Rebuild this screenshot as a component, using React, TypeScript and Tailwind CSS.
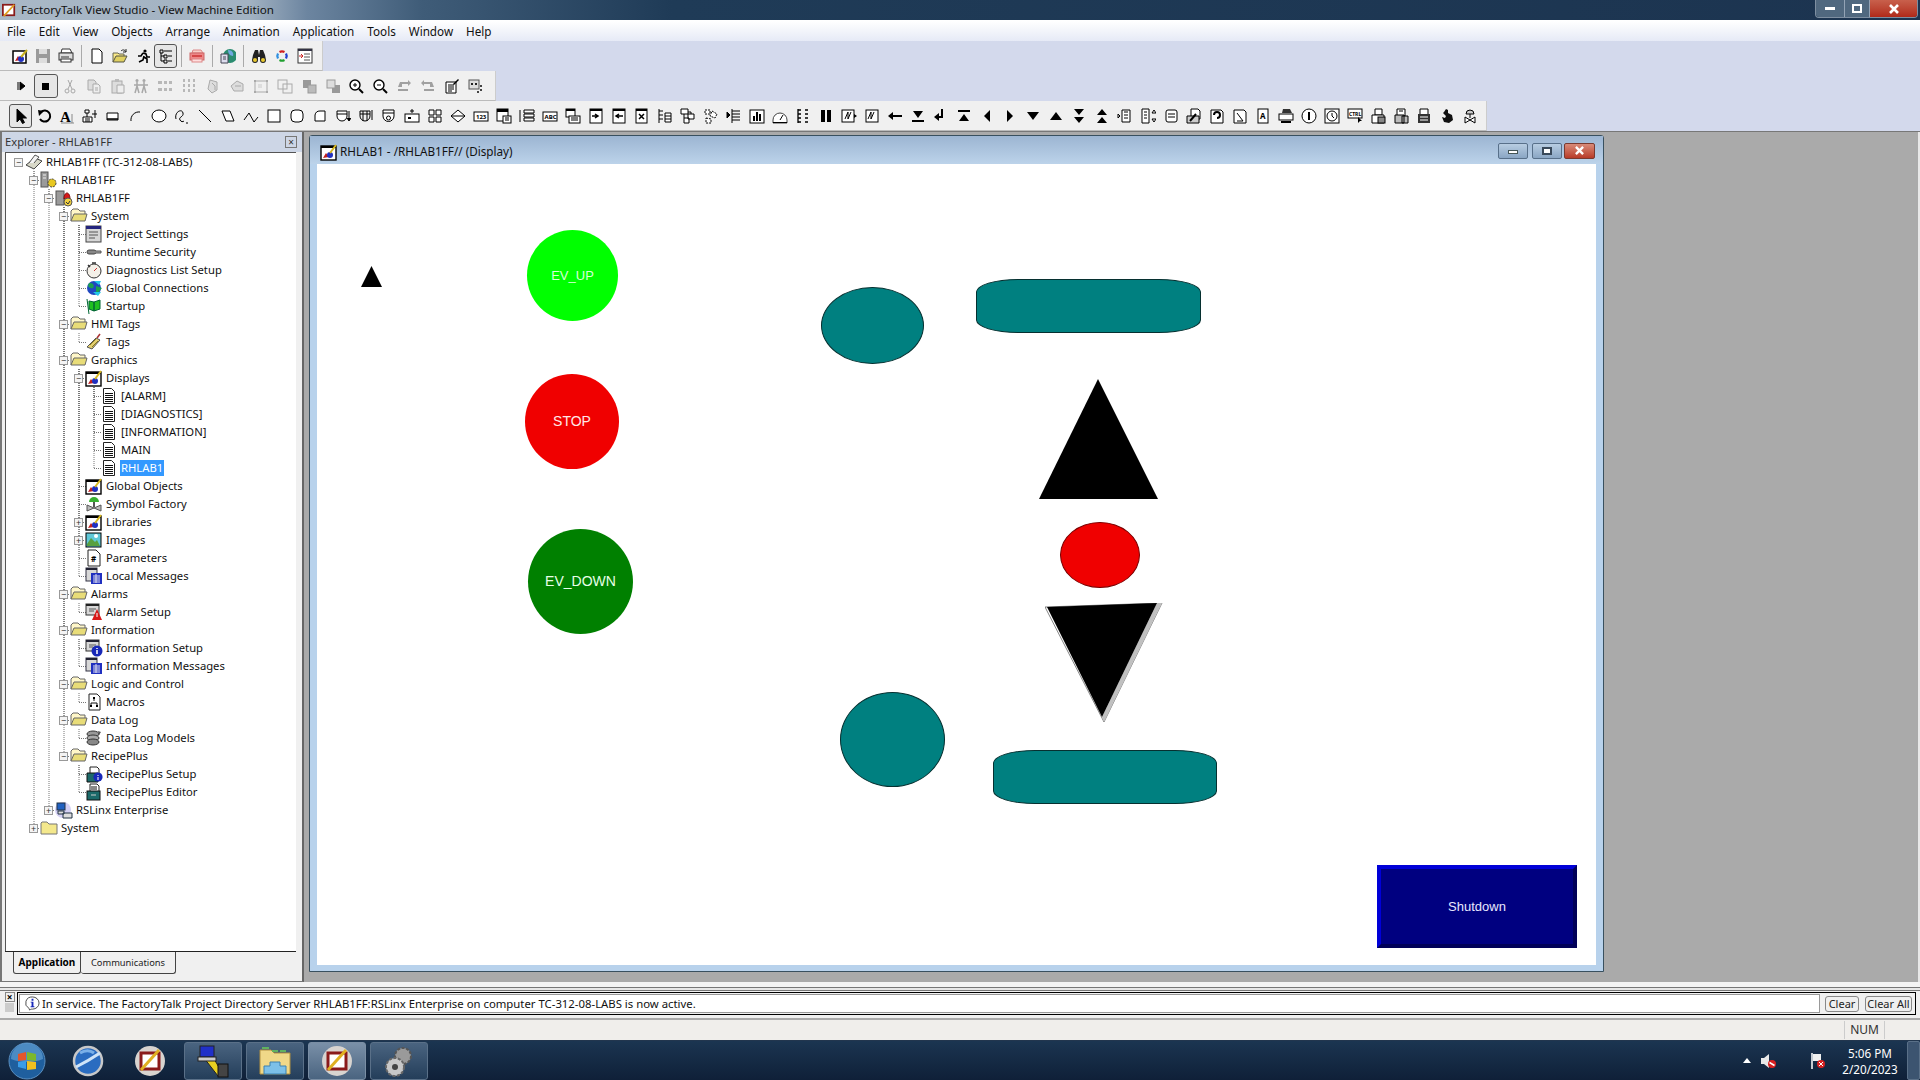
import type { ReactNode } from "react"

const treeRows: { label: string; depth: number; icon: string; toggle?: "-" | "+"; selected?: boolean }[] = [
  { label: "RHLAB1FF (TC-312-08-LABS)", depth: 0, icon: "root", toggle: "-" },
  { label: "RHLAB1FF", depth: 1, icon: "app", toggle: "-" },
  { label: "RHLAB1FF", depth: 2, icon: "server", toggle: "-" },
  { label: "System", depth: 3, icon: "folderOpen", toggle: "-" },
  { label: "Project Settings", depth: 4, icon: "settings" },
  { label: "Runtime Security", depth: 4, icon: "key" },
  { label: "Diagnostics List Setup", depth: 4, icon: "watch" },
  { label: "Global Connections", depth: 4, icon: "globe" },
  { label: "Startup", depth: 4, icon: "flag" },
  { label: "HMI Tags", depth: 3, icon: "folderOpen", toggle: "-" },
  { label: "Tags", depth: 4, icon: "tag" },
  { label: "Graphics", depth: 3, icon: "folderOpen", toggle: "-" },
  { label: "Displays", depth: 4, icon: "paint", toggle: "-" },
  { label: "[ALARM]", depth: 5, icon: "doc" },
  { label: "[DIAGNOSTICS]", depth: 5, icon: "doc" },
  { label: "[INFORMATION]", depth: 5, icon: "doc" },
  { label: "MAIN", depth: 5, icon: "doc" },
  { label: "RHLAB1", depth: 5, icon: "doc", selected: true },
  { label: "Global Objects", depth: 4, icon: "paint" },
  { label: "Symbol Factory", depth: 4, icon: "valve" },
  { label: "Libraries", depth: 4, icon: "paint", toggle: "+" },
  { label: "Images", depth: 4, icon: "image", toggle: "+" },
  { label: "Parameters", depth: 4, icon: "param" },
  { label: "Local Messages", depth: 4, icon: "messages" },
  { label: "Alarms", depth: 3, icon: "folderOpen", toggle: "-" },
  { label: "Alarm Setup", depth: 4, icon: "alarm" },
  { label: "Information", depth: 3, icon: "folderOpen", toggle: "-" },
  { label: "Information Setup", depth: 4, icon: "info" },
  { label: "Information Messages", depth: 4, icon: "messages" },
  { label: "Logic and Control", depth: 3, icon: "folderOpen", toggle: "-" },
  { label: "Macros", depth: 4, icon: "macro" },
  { label: "Data Log", depth: 3, icon: "folderOpen", toggle: "-" },
  { label: "Data Log Models", depth: 4, icon: "datalog" },
  { label: "RecipePlus", depth: 3, icon: "folderOpen", toggle: "-" },
  { label: "RecipePlus Setup", depth: 4, icon: "recipeInfo" },
  { label: "RecipePlus Editor", depth: 4, icon: "recipeDisk" },
  { label: "RSLinx Enterprise", depth: 2, icon: "rslinx", toggle: "+" },
  { label: "System", depth: 1, icon: "folder", toggle: "+" },
]

const depthPadding = ["pl-[8px]", "pl-[23px]", "pl-[38px]", "pl-[53px]", "pl-[68px]", "pl-[83px]"]

function TreeIcon({ name }: { name: string }) {
  const icons: Record<string, ReactNode> = {
    root: <><path d="M1 12l9-7 7 3-8 8z" fill="#d8d8c8" stroke="#444" /><path d="M4 10l6-8 4 2-5 6" fill="#f4f4f4" stroke="#555" /></>,
    app: <><rect x="1" y="1" width="7" height="15" fill="#9a9a9a" stroke="#555" /><path d="M3 4h3M3 7h3" stroke="#eee" /><circle cx="12" cy="12" r="4" fill="#e8c820" stroke="#444" strokeDasharray="2 1" /></>,
    server: <><rect x="1" y="2" width="8" height="14" fill="#9a9a9a" stroke="#555" /><path d="M9 10c0-8 6-8 6 0z" fill="#d81818" stroke="#700" /><circle cx="13" cy="13" r="4" fill="#f0d040" stroke="#555" /><path d="M11 13l2 2 2-3" stroke="#333" fill="none" /></>,
    folderOpen: <><path d="M1 14V4l2-2h5l2 2h5v3" fill="#fff7c8" stroke="#666" /><path d="M1 14l3-7h13l-2 7z" fill="#e8dc78" stroke="#666" /></>,
    folder: <path d="M1 15V4l1-1h5l2 2h8v10z" fill="#f4e88c" stroke="#777" />,
    settings: <><rect x="1" y="1" width="15" height="16" fill="#d6d6d6" stroke="#444" /><rect x="1" y="1" width="15" height="3" fill="#24247c" /><path d="M4 7h9M4 10h9M4 13h6" stroke="#555" /></>,
    key: <><rect x="2" y="7" width="9" height="4" rx="2" fill="#888" stroke="#444" /><path d="M10 8h6v2h-6" fill="#aaa" stroke="#555" /></>,
    watch: <><circle cx="9" cy="10" r="7" fill="#f4f0e8" stroke="#333" /><path d="M9 10l3-3" stroke="#c33" /><path d="M7 2h4M3 4l2 2" stroke="#333" strokeWidth="1.5" /></>,
    globe: <><circle cx="9" cy="9" r="7" fill="#1f48c0" /><path d="M4 4c4 0 6 2 4 5-3 1-4-1-5-2zM11 7l6 2-6 7z" fill="#1aa050" /><path d="M8 13h8l-3 4zM9 2h7l-2 4z" fill="#22c8e8" /></>,
    flag: <><path d="M4 17L2 2M4 4l5 1v9l-5-2zM9 5l6-2v9l-6 2z" fill="#20c020" stroke="#063" /></>,
    tag: <><path d="M2 14l9-9 4 2-8 9z" fill="#e4d070" stroke="#555" /><path d="M5 12l6-6M7 14l6-6" stroke="#8a7a20" /><path d="M12 5l3-4" stroke="#a33" strokeWidth="1.5" /></>,
    paint: <><rect x="1" y="3" width="15" height="14" fill="#fff" stroke="#000" strokeWidth="1.4" /><rect x="1" y="3" width="15" height="2" fill="#000" /><path d="M3 15l3-5 3 4z" fill="#c02020" /><circle cx="10" cy="12" r="3" fill="#2030c0" /><path d="M10 10l6-8" stroke="#d8b820" strokeWidth="2" /></>,
    doc: <><path d="M3.5 1.5h8l3 3v12h-11z" fill="#fff" stroke="#222" /><path d="M5 6.5h8M5 8.5h8M5 10.5h8M5 12.5h8M5 14.5h8" stroke="#111" /></>,
    valve: <><path d="M4 7a5 5 0 0 1 10 0z" fill="#38b030" /><path d="M9 7v5" stroke="#555" strokeWidth="2" /><path d="M2 10v6l7-3 7 3v-6l-7 3z" fill="#bbb" stroke="#555" /></>,
    image: <><rect x="1" y="2" width="15" height="14" fill="#60c8d8" stroke="#000" /><path d="M2 13l4-6 4 4 2-2 3 6H2z" fill="#58a040" /><circle cx="11" cy="5" r="2" fill="#fff" /></>,
    param: <><path d="M3 1h8l4 4v12H3z" fill="#fff" stroke="#222" /><text x="6" y="13" fontSize="8" fontWeight="700" fill="#000">#</text></>,
    messages: <><rect x="1" y="1" width="11" height="13" fill="#d8d8d8" stroke="#334" /><rect x="1" y="1" width="11" height="2" fill="#223" /><rect x="6" y="6" width="11" height="11" fill="#2030c0" /><path d="M8 9h7M8 11h7M8 13h7M8 15h7M11 7v9" stroke="#dde" /></>,
    alarm: <><rect x="1" y="1" width="13" height="11" fill="#d8d8d8" stroke="#333" /><rect x="1" y="1" width="13" height="2" fill="#222" /><path d="M4 6h7M4 8h5" stroke="#555" /><path d="M12 6l5 11H7z" fill="#d81818" /><path d="M12 10v4" stroke="#fff" /></>,
    info: <><rect x="1" y="1" width="13" height="11" fill="#d8d8d8" stroke="#333" /><rect x="1" y="1" width="13" height="2" fill="#223" /><path d="M4 6h7M4 8h4" stroke="#555" /><circle cx="12" cy="12" r="5.5" fill="#1828b8" /><path d="M12 9v1M12 11v4" stroke="#fff" strokeWidth="1.5" /></>,
    macro: <><path d="M4 1h8l3 3v13H4z" fill="#fff" stroke="#222" /><path d="M9 5v3M6 13v-3h6v3" stroke="#111" fill="none" /><rect x="8" y="4" width="2" height="2" /><rect x="5" y="12" width="2" height="2" /><rect x="11" y="12" width="2" height="2" /></>,
    datalog: <><ellipse cx="8" cy="5" rx="6" ry="3" fill="#999" stroke="#333" /><ellipse cx="8" cy="9" rx="6" ry="3" fill="#aaa" stroke="#333" /><ellipse cx="8" cy="13" rx="6" ry="3" fill="#888" stroke="#333" /><path d="M13 2l3 1-2 3" fill="#555" /></>,
    recipeInfo: <><path d="M5 2h7l2 2v5H5z" fill="#fff" stroke="#222" /><path d="M2 8h11v9H2z" fill="#1c6a6a" stroke="#111" /><circle cx="13" cy="12" r="4.6" fill="#1828b8" /><path d="M13 10v1M13 12v3" stroke="#fff" /></>,
    recipeDisk: <><path d="M5 1h7l2 2v6H5z" fill="#fff" stroke="#222" /><path d="M6 4h6M6 6h6" stroke="#111" /><rect x="2" y="8" width="13" height="9" fill="#1c6a6a" stroke="#111" /><path d="M6 12h5" stroke="#ccc" /></>,
    rslinx: <><circle cx="8" cy="9" r="8" fill="#d4d0f4" /><rect x="2" y="2" width="8" height="7" fill="#2060c0" stroke="#234" /><path d="M8 12h9v5H8zM3 10h6v3H3z" fill="#ddd" stroke="#234" /></>,
  }
  return (
    <svg viewBox="0 0 18 18" className="h-[18px] w-[18px] shrink-0">
      {icons[name]}
    </svg>
  )
}

function TreeLines() {
  const cx = (d: number) => 12.5 + 15 * d
  const rowY = (i: number) => 9 + 18 * i
  return (
    <svg className="pointer-events-none absolute left-0 top-0 h-[700px] w-[120px]">
      {treeRows.map((row, i) => {
        if (row.depth === 0) return null
        let p = i - 1
        while (treeRows[p].depth >= row.depth) p--
        const x = cx(row.depth) + 0.5
        const y = rowY(i) + 0.5
        return (
          <g key={i} stroke="#777" strokeDasharray="1 1" fill="none">
            <path d={`M${x} ${rowY(p) + 9}V${y}`} />
            <path d={`M${x} ${y}h${row.toggle ? 6 : 8}`} />
          </g>
        )
      })}
    </svg>
  )
}

function Explorer() {
  return (
    <div className="flex h-full w-[304px] shrink-0 flex-col border-x-2 border-b border-b-[#777] border-l-[#777] border-r-[#666] bg-[#f0f0f0]">
      <div className="flex h-[20px] shrink-0 items-center justify-between bg-[#cdd6e6] pl-[3px] pr-[5px] text-[#333]">
        <span className="text-[11.2px]">Explorer - RHLAB1FF</span>
        <span className="flex h-[12px] w-[12px] items-center justify-center border border-[#777] text-[10px] leading-none text-[#333]">×</span>
      </div>
      <div className="relative ml-[3px] mr-[6px] h-[799px] shrink-0 border-l border-t border-[#555] bg-white">
        <TreeLines />
        <div className="relative">
          {treeRows.map((row, i) => (
            <div key={i} className={`flex h-[18px] items-center ${depthPadding[row.depth]}`}>
              <span className="mr-[2px] flex h-[9px] w-[9px] shrink-0 items-center justify-center">
                {row.toggle && (
                  <span className="flex h-[9px] w-[9px] items-center justify-center border border-[#999] bg-[#f4f4f4] text-[9px] leading-none text-[#333]">
                    {row.toggle === "-" ? "−" : "+"}
                  </span>
                )}
              </span>
              <TreeIcon name={row.icon} />
              <span className={`ml-[2px] whitespace-nowrap px-[1px] text-[11.25px] leading-[16px] ${row.selected ? "bg-[#3399ff] text-white" : "text-[#111]"}`}>
                {row.label}
              </span>
            </div>
          ))}
        </div>
      </div>
      <div className="mx-[3px] mr-[6px] flex h-[25px] shrink-0 border-t border-[#222] pl-[8px] text-[10px]">
        <span className="flex h-[22px] w-[68px] items-center justify-center rounded-b-[3px] border-x border-b border-[#444] font-bold">Application</span>
        <span className="flex h-[22px] w-[95px] items-center justify-center rounded-b-[3px] border-r border-b border-[#444] text-[9.3px] text-[#222]">Communications</span>
      </div>
    </div>
  )
}

function ToolIcon({ name, dim }: { name: string; dim?: boolean }) {
  const icons: Record<string, ReactNode> = {
    display: <><rect x="1" y="3" width="13" height="12" fill="#fff" stroke="#000" strokeWidth="1.5" /><path d="M3 13l3-5 3 4z" fill="#c02020" /><circle cx="9" cy="11" r="3" fill="#2030c0" /><path d="M9 9l6-7" stroke="#c8b020" strokeWidth="2" /></>,
    save: <><path d="M1 1h14v14H1z" fill="#9a9a9a" /><rect x="4" y="1" width="8" height="5" fill="#ddd" /><rect x="4" y="10" width="8" height="5" fill="#ddd" /></>,
    print: <><path d="M4 1h8l2 4H3z" fill="#fff" stroke="#333" /><rect x="1" y="5" width="14" height="7" fill="#ddd" stroke="#333" /><path d="M3 9h8" stroke="#333" /><rect x="3" y="11" width="10" height="3" fill="#fff" stroke="#333" /></>,
    newDoc: <path d="M3 1h7l3 3v11H3z" fill="#fff" stroke="#000" />,
    open: <><path d="M1 14V5h5l1 1h5v2" fill="#f8e888" stroke="#665" /><path d="M1 14l3-6h11l-3 6z" fill="#e0d060" stroke="#554" /><path d="M9 3c2-2 4-1 5 1M14 1v3h-3" stroke="#222" fill="none" /></>,
    run: <><circle cx="10" cy="3" r="1.6" /><path d="M8 5l3 1 1 3 3 0M8 5l-2 3-3 0M9 8l-1 4-4 2M9 9l3 2 0 4" stroke="#000" strokeWidth="1.6" fill="none" /></>,
    tree: <><path d="M2 2h3v3H2zM6 7h3v3H6zM6 12h3v3H6zM3 5v8h3M3 8h3M6 3h8M10 8h4M10 13h4" fill="none" stroke="#000" /></>,
    redPrint: <><path d="M4 2h8l2 3H3z" fill="#f8d0c8" stroke="#d88" /><rect x="1" y="5" width="14" height="7" fill="#e88" stroke="#c66" /><path d="M3 8h10" stroke="#c33" strokeWidth="1.5" /><rect x="3" y="11" width="10" height="3" fill="#fdd" stroke="#d88" /></>,
    earth: <><circle cx="10" cy="8" r="7" fill="#2a8c70" /><path d="M8 2c4 0 6 3 5 6-3 0-5-3-5-6z" fill="#70a8e0" /><path d="M1 6h7v9H1z" fill="#dde" stroke="#445" /><path d="M3 9h3M3 11h3" stroke="#445" /></>,
    binoc: <><path d="M2 7l2-5h3l1 5h0l1-5h3l2 5 1 5a2 2 0 0 1-6 0V9H7v3a2 2 0 0 1-6 0z" fill="#222" /><circle cx="4" cy="12" r="2" fill="#e8c830" /><circle cx="12" cy="12" r="2" fill="#e8c830" /></>,
    cycle: <><path d="M5 3a6 6 0 0 1 6 0l-1 2a4 4 0 0 0-4 0z" fill="#d02020" /><path d="M13 5a6 6 0 0 1 0 6l-2-1a4 4 0 0 0 0-4z" fill="#2040d0" /><path d="M11 13a6 6 0 0 1-6 0l1-2a4 4 0 0 0 4 0z" fill="#20a030" /><path d="M3 11a6 6 0 0 1 0-6l2 1a4 4 0 0 0 0 4z" fill="#3090e0" /></>,
    listArrow: <><rect x="1" y="1" width="14" height="14" fill="#fff" stroke="#333" /><rect x="1" y="1" width="14" height="2" fill="#334" /><path d="M7 6h6M7 9h6M7 12h6" stroke="#555" /><path d="M2 8h3M4 6l2 2-2 2" stroke="#c22" fill="none" /></>,
    playBar: <><path d="M4 4v8M6 4l5 4-5 4z" fill="#000" stroke="#000" /></>,
    stop: <rect x="4" y="5" width="7" height="7" fill="#000" />,
    cut: <><circle cx="5" cy="13" r="2" fill="none" stroke="#a8a8a8" /><circle cx="11" cy="13" r="2" fill="none" stroke="#a8a8a8" /><path d="M6 11l4-9M10 11L6 2" stroke="#a8a8a8" /></>,
    copy: <><path d="M2 2h6l2 2v8H2z" fill="#ddd" stroke="#aaa" /><path d="M7 6h5l2 2v7H7z" fill="#eee" stroke="#aaa" /><path d="M9 10h3M9 12h3" stroke="#aaa" /></>,
    paste: <><rect x="2" y="3" width="10" height="12" fill="#ddd" stroke="#aaa" /><rect x="5" y="1" width="4" height="3" fill="#bbb" /><path d="M7 7h7v8H7z" fill="#eee" stroke="#aaa" /></>,
    people: <><path d="M4 4v4M2 15l2-7 2 7M11 4v4M9 15l2-7 2 7M1 7h14" stroke="#a8a8a8" strokeWidth="1.5" fill="none" /><circle cx="4" cy="2.5" r="1.5" fill="#a8a8a8" /><circle cx="11" cy="2.5" r="1.5" fill="#a8a8a8" /></>,
    rowDots: <path d="M1 3h4v3H1zM7 3h3v3H7zM12 3h3v3h-3zM1 10h4v3H1zM7 10h3v3H7zM12 10h3v3h-3z" fill="#b8b8b8" />,
    colDots: <path d="M2 1h2v3H2zM2 6h2v3H2zM2 11h2v3H2zM7 1h2v3H7zM7 6h2v3H7zM7 11h2v3H7zM12 1h2v3h-2zM12 6h2v3h-2zM12 11h2v3h-2z" fill="#b8b8b8" />,
    front: <><path d="M5 2l7 2v8l-5 3-4-4z" fill="#ddd" stroke="#aaa" /><path d="M7 5l3 3v4" stroke="#aaa" fill="none" /></>,
    back: <><path d="M2 8l6-5 6 3v7H5z" fill="#ddd" stroke="#aaa" /><path d="M6 8h6" stroke="#aaa" /></>,
    group: <><rect x="2" y="3" width="12" height="11" fill="none" stroke="#aaa" /><path d="M1 2h2v2H1zM13 2h2v2h-2zM1 13h2v2H1zM13 13h2v2h-2z" fill="#aaa" /><rect x="5" y="6" width="4" height="4" fill="#ddd" /></>,
    ungroup: <><rect x="1" y="2" width="9" height="9" fill="none" stroke="#aaa" /><rect x="6" y="6" width="9" height="9" fill="none" stroke="#aaa" /></>,
    stackA: <><rect x="2" y="2" width="8" height="8" fill="#999" /><rect x="7" y="7" width="8" height="8" fill="#bbb" stroke="#999" /></>,
    stackB: <><rect x="7" y="7" width="8" height="8" fill="#999" /><rect x="2" y="2" width="8" height="8" fill="#ddd" stroke="#999" /></>,
    zoomIn: <><circle cx="7" cy="7" r="5" fill="#fff" stroke="#000" strokeWidth="1.4" /><path d="M5 7h4M7 5v4" stroke="#000" /><path d="M11 11l4 4" stroke="#000" strokeWidth="2" /></>,
    zoomOut: <><circle cx="7" cy="7" r="5" fill="#fff" stroke="#000" strokeWidth="1.4" /><path d="M5 7h4" stroke="#000" /><path d="M11 11l4 4" stroke="#000" strokeWidth="2" /></>,
    swapA: <path d="M4 4h8V2l3 3-3 3V6H6v3H2zM2 11h10v2H2z" fill="#a0a0a0" />,
    swapB: <path d="M12 4H4V2L1 5l3 3V6h6v3h4zM4 11h10v2H4z" fill="#a0a0a0" />,
    props: <><path d="M2 4h10v11H2z" fill="#fff" stroke="#000" /><path d="M4 7h6M4 9h6M4 11h6M4 13h4" stroke="#000" /><path d="M9 6l5-5 1 1-5 5z" fill="#000" /></>,
    palette: <><rect x="1" y="2" width="10" height="9" fill="#ddd" stroke="#555" /><path d="M3 5h2v2H3zM7 5h2v2H7z" fill="#222" /><path d="M12 7h2v2h-2zM12 11h2v2h-2zM9 13h2v2H9z" fill="#444" /></>,
    arrow: <path d="M4 1v13l3-3 2.5 4.5 2-1L9 10h4.5z" fill="#000" stroke="#000" />,
    undo: <><path d="M5 4a5.5 5.5 0 1 1-1 7" fill="none" stroke="#000" strokeWidth="2" /><path d="M2 2l6 1-5 5z" fill="#000" /></>,
    textA: <><text x="1" y="14" fontSize="15" fontFamily="Liberation Serif, serif" fontWeight="700" fill="#000">A</text><path d="M2 15h13M13 6v9" stroke="#888" /></>,
    symbol: <><path d="M3 2h4v3H3zM1 9h9v5H1zM5 5v4M10 6h5M13 2v8" fill="#fff" stroke="#000" /><path d="M3 11h5M3 13h5" stroke="#000" /></>,
    rectSm: <><path d="M2 5h11v7H2z" fill="#fff" stroke="#000" /><path d="M2 11h11" stroke="#000" strokeWidth="1.5" /></>,
    arc: <path d="M3 13a8 8 0 0 1 9-9" fill="none" stroke="#000" />,
    ellipse: <ellipse cx="8" cy="8" rx="7" ry="6" fill="#fff" stroke="#000" />,
    free: <path d="M2 11c-2-7 6-11 7-6 1 4-5 4-3 7 1 2 3 2 4 1M12 15h2" fill="none" stroke="#000" />,
    line: <path d="M2 2l12 12" stroke="#000" />,
    para: <path d="M2 3h8l4 10H6z" fill="#fff" stroke="#000" />,
    poly: <path d="M1 12l5-7 5 9 4-5" fill="none" stroke="#000" />,
    rect: <rect x="2" y="2" width="12" height="12" fill="#fff" stroke="#000" />,
    rrect: <rect x="2" y="2" width="12" height="12" rx="4" fill="#fff" stroke="#000" />,
    wedge: <path d="M3 13V7a5 5 0 0 1 5-4h5v10z" fill="#fff" stroke="#000" />,
    btnA: <><path d="M2 3h10v5a5 5 0 0 1-10 0zM2 6h10" fill="#fff" stroke="#000" /><path d="M14 3v9M12 10l2 3 2-3" fill="#000" stroke="#000" /></>,
    btnB: <><path d="M2 3h10v5a5 5 0 0 1-10 0zM2 6h10M5 3v10M9 3v10" fill="none" stroke="#000" /><path d="M14 2v10" stroke="#000" /></>,
    btnC: <><path d="M2 2h11v6a5.5 5.5 0 0 1-11 0zM2 5h11" fill="#fff" stroke="#000" /><circle cx="7.5" cy="10" r="2" fill="none" stroke="#000" /></>,
    kbd: <><rect x="1" y="6" width="14" height="8" fill="#fff" stroke="#000" /><rect x="4" y="9" width="3" height="2" fill="#000" /><path d="M8 1v4M6 3h4" stroke="#000" /></>,
    multi: <path d="M2 2h5v5H2zM9 2h5v5H9zM2 9h5v5H2zM9 9h5v5H9z" fill="#fff" stroke="#000" />,
    diamond: <path d="M1 8l7-6 7 6-7 6zM1 8h14" fill="#fff" stroke="#000" />,
    num: <><rect x="1" y="4" width="14" height="9" fill="#fff" stroke="#000" /><text x="3" y="11" fontSize="6" fontWeight="700" fill="#000">123</text></>,
    dialog: <><rect x="1" y="1" width="11" height="12" fill="#fff" stroke="#000" /><rect x="1" y="1" width="11" height="3" fill="#000" /><rect x="7" y="8" width="8" height="7" fill="#fff" stroke="#000" /><path d="M9 10h4M9 12h4" stroke="#000" /></>,
    rows: <path d="M5 2h10v3H5zM5 6h10v3H5zM5 10h10v3H5zM1 2v12" fill="#fff" stroke="#000" />,
    abc: <><rect x="1" y="4" width="14" height="9" fill="#fff" stroke="#000" /><text x="2.5" y="11" fontSize="6" fontWeight="700" fill="#000">ABC</text></>,
    winList: <><rect x="1" y="1" width="9" height="8" fill="#fff" stroke="#000" /><rect x="1" y="1" width="9" height="2" fill="#000" /><rect x="4" y="8" width="11" height="7" fill="#fff" stroke="#000" /><path d="M6 10h7M6 12h7" stroke="#000" /></>,
    winIn: <><rect x="2" y="1" width="12" height="14" fill="#fff" stroke="#000" /><rect x="2" y="1" width="12" height="2" fill="#000" /><path d="M4 8h5M7 6l3 2-3 2" stroke="#000" strokeWidth="1.5" fill="none" /></>,
    winOut: <><rect x="2" y="1" width="12" height="14" fill="#fff" stroke="#000" /><rect x="2" y="1" width="12" height="2" fill="#000" /><path d="M12 8H6M8 6L5 8l3 2" stroke="#000" strokeWidth="1.5" fill="none" /></>,
    winX: <><rect x="2" y="1" width="11" height="14" fill="#fff" stroke="#000" /><rect x="2" y="1" width="11" height="2" fill="#000" /><path d="M5 6l5 5M10 6l-5 5" stroke="#000" strokeWidth="1.5" /></>,
    ladder: <path d="M2 1v14M2 3h4M2 7h4M2 11h4M8 5h6v9H8zM8 8h6M8 11h6" fill="#fff" stroke="#000" />,
    nest: <path d="M1 1h7v5H1zM8 6h6v5H8zM4 10h5v5H4zM4 6v4M8 4h3v2" fill="#fff" stroke="#000" />,
    spider: <path d="M2 2h5v4H2zM9 3l5 3-2 4-5-2zM3 10l5 1v4H3z" fill="#fff" stroke="#000" strokeDasharray="2 1" />,
    vGauge: <path d="M1 4l3 3-3 3zM6 1v14M6 3h8M6 6h8M6 9h8M6 12h8" fill="#000" stroke="#000" />,
    chart: <><rect x="1" y="2" width="14" height="13" fill="#fff" stroke="#000" /><path d="M4 13V8h2v5zM7 13V4h2v9zM10 13V6h2v7z" fill="#000" /></>,
    meter: <><path d="M1 12a7 7 0 0 1 14 0v3H1z" fill="#fff" stroke="#444" /><path d="M1 14h14v1H1z" fill="#000" /><path d="M8 12l3-5" stroke="#000" /></>,
    scale: <path d="M3 1v14M3 2h3M3 6h3M3 10h3M3 14h3M10 2h3M10 6h3M10 10h3M10 14h3" stroke="#000" strokeWidth="1.3" />,
    pause: <path d="M3 2h4v12H3zM9 2h4v12H9z" fill="#000" />,
    trendA: <><rect x="1" y="2" width="12" height="12" fill="#fff" stroke="#000" /><path d="M4 11l3-7v7l3-7" fill="none" stroke="#000" /><path d="M13 6l3 2-3 2z" fill="#000" /></>,
    trendB: <><rect x="2" y="2" width="12" height="12" fill="#fff" stroke="#000" /><path d="M4 11l3-7v7l3-7" fill="none" stroke="#000" /></>,
    leftBar: <path d="M1 8l5-4v3h9v2H6v3z" fill="#000" />,
    downEnd: <path d="M3 3h10L8 10zM2 12h12v2H2z" fill="#000" />,
    enter: <path d="M8 1h2v9H6v3L1 9l5-4v3h2z" fill="#000" />,
    upEnd: <path d="M3 13h10L8 6zM2 2h12v2H2z" fill="#000" />,
    triL: <path d="M11 2v12L5 8z" fill="#000" />,
    triR: <path d="M5 2v12l6-6z" fill="#000" />,
    triD: <path d="M2 4h12l-6 8z" fill="#000" />,
    triU: <path d="M2 12h12L8 4z" fill="#000" />,
    dblD: <path d="M3 1h10L8 7zM3 9h10l-5 6z" fill="#000" />,
    dblU: <path d="M3 7h10L8 1zM3 15h10L8 9z" fill="#000" />,
    cyl: <path d="M1 6l2 2-2 2zM5 2h8v12H5zM7 4h4M7 7h4M7 10h4" fill="#fff" stroke="#000" />,
    listUpDown: <path d="M2 1h7v14H2zM4 4h3M4 7h3M4 10h3M12 5l2-3 2 3zM12 11l2 3 2-3z" fill="#fff" stroke="#000" />,
    box: <><rect x="3" y="2" width="11" height="12" rx="2" fill="#fff" stroke="#000" /><path d="M5 6h7M5 9h7" stroke="#000" /></>,
    docsA: <><path d="M5 1h7l2 2v8H5z" fill="#fff" stroke="#000" /><path d="M1 8h12v7H1z" fill="#ccc" stroke="#000" /><path d="M4 13l6-7" stroke="#000" strokeWidth="2" /></>,
    docsB: <><path d="M2 2h10l2 2v11H2z" fill="#fff" stroke="#000" /><path d="M5 7a3 3 0 1 1 3 3" fill="none" stroke="#000" strokeWidth="2" /></>,
    docsC: <><path d="M2 2h10l2 2v11H2z" fill="#fff" stroke="#000" /><path d="M5 5l6 8M5 13h6" stroke="#000" /></>,
    letter: <><rect x="3" y="1" width="10" height="14" fill="#fff" stroke="#000" /><text x="5" y="11" fontSize="8" fontWeight="700" fill="#000">A</text></>,
    printer: <><path d="M5 1h7l2 4H4z" fill="#333" /><rect x="1" y="6" width="14" height="6" fill="#fff" stroke="#000" /><path d="M3 13h10v2H3z" fill="#000" /></>,
    oneCircle: <><circle cx="8" cy="8" r="7" fill="#fff" stroke="#000" /><path d="M8 4v8" stroke="#000" strokeWidth="2" /></>,
    clock: <><rect x="1" y="1" width="14" height="14" fill="#fff" stroke="#000" /><circle cx="8" cy="8" r="5" fill="none" stroke="#000" /><path d="M8 5v3l2 2" stroke="#000" fill="none" /></>,
    ctrl: <><rect x="1" y="1" width="14" height="9" fill="#fff" stroke="#000" /><text x="2" y="8" fontSize="5" fontWeight="700" fill="#000">CTRL</text><path d="M11 9v6l2-2h2z" fill="#000" /></>,
    recA: <><path d="M5 1h7v6H5z" fill="#fff" stroke="#000" /><path d="M2 7h12v8H2z" fill="#fff" stroke="#000" /><rect x="8" y="9" width="7" height="6" fill="#888" stroke="#000" /></>,
    recB: <><path d="M4 1h8v7H4z" fill="#fff" stroke="#000" /><path d="M2 7h9v8H2zM9 8h6v7H9z" fill="#bbb" stroke="#000" /><path d="M6 3h4" stroke="#000" /></>,
    recC: <><path d="M4 1h8v6H4z" fill="#fff" stroke="#000" /><path d="M2 6h12v9H2z" fill="#333" /><path d="M4 9h8M4 12h8" stroke="#fff" /></>,
    hand: <path d="M7 1l2 1v3l4 2 1 5-4 3-5-1-2-5 3 1 1-2-3-3 1-1z" fill="#111" />,
    valve: <><path d="M4 6a4 4 0 0 1 8 0z" fill="#ccc" stroke="#000" /><path d="M8 6v4" stroke="#000" /><path d="M3 9v6l5-3 5 3V9l-5 3z" fill="#fff" stroke="#000" /></>,
  }
  return (
    <svg viewBox="0 0 16 16" className={`h-[16px] w-[16px] ${dim ? "opacity-50" : ""}`}>
      {icons[name]}
    </svg>
  )
}

const row1 = ["display", "save", "print", "|", "newDoc", "open", "run", "*tree", "|", "redPrint", "|", "earth", "|", "binoc", "cycle", "listArrow"]
const row2 = ["playBar", "*stop", "cut", "copy", "paste", "people", "rowDots", "colDots", "front", "back", "group", "ungroup", "stackA", "stackB", "zoomIn", "zoomOut", "swapA", "swapB", "props", "palette"]
const row3 = [
  "*arrow", "undo", "textA", "symbol", "rectSm", "arc", "ellipse", "free", "line", "para", "poly", "rect", "rrect", "wedge", "btnA", "btnB", "btnC", "kbd", "multi", "diamond", "num", "dialog",
  "rows", "abc", "winList", "winIn", "winOut", "winX", "ladder", "nest", "spider", "vGauge", "chart", "meter", "scale", "pause", "trendA", "trendB", "leftBar", "downEnd", "enter", "upEnd", "triL", "triR", "triD", "triU", "dblD", "dblU",
  "cyl", "listUpDown", "box", "docsA", "docsB", "docsC", "letter", "printer", "oneCircle", "clock", "ctrl", "recA", "recB", "recC", "hand", "valve",
]

function Toolbar({ items, width, itemWidth, grip }: { items: string[]; width: string; itemWidth: string; grip: string }) {
  return (
    <div className={`flex h-[30px] shrink-0 items-center border-b border-r border-b-[#bbb] border-r-[#ccc] bg-[#f0f0f0] ${width} ${grip}`}>
      {items.map((item, i) =>
        item === "|" ? (
          <span key={i} className="mx-[3.5px] h-[22px] w-px shrink-0 bg-[#aaa]" />
        ) : (
          <span key={i} className={`flex h-[24px] shrink-0 items-center justify-center ${itemWidth} ${item.startsWith("*") ? "rounded-[3px] border border-[#555] bg-[#e6e6e6]" : ""}`}>
            <ToolIcon name={item.replace("*", "")} />
          </span>
        ),
      )}
    </div>
  )
}

function Canvas() {
  return (
    <div className="relative flex-1 bg-white font-['Liberation_Sans',sans-serif]">
      <svg viewBox="0 0 21 21" className="absolute left-[44px] top-[102px] h-[21px] w-[21px]">
        <path d="M10.5 0L21 21H0z" fill="#000" />
      </svg>
      <div className="absolute left-[210px] top-[66px] flex h-[91px] w-[91px] items-center justify-center rounded-[50%] bg-[#00ff00] text-[13px] text-[#d8ffd8]">EV_UP</div>
      <div className="absolute left-[208px] top-[210px] flex h-[95px] w-[94px] items-center justify-center rounded-[50%] bg-[#f00000] text-[14px] text-[#ffe8e8]">STOP</div>
      <div className="absolute left-[211px] top-[365px] flex h-[105px] w-[105px] items-center justify-center rounded-[50%] bg-[#008000] text-[14px] text-[#e8ffe8]">EV_DOWN</div>
      <div className="absolute left-[504px] top-[123px] h-[77px] w-[103px] rounded-[50%] border border-[#063030] bg-[#008080]" />
      <div className="absolute left-[659px] top-[115px] h-[54px] w-[225px] rounded-[42px/13px] border border-[#063030] bg-[#008080]" />
      <svg viewBox="0 0 119 120" className="absolute left-[722px] top-[215px] h-[120px] w-[119px]">
        <path d="M59 0L119 120H0z" fill="#000" />
      </svg>
      <div className="absolute left-[743px] top-[358px] h-[66px] w-[80px] rounded-[50%] border border-[#7a0000] bg-[#f00000]" />
      <svg viewBox="0 0 118 120" className="absolute left-[728px] top-[439px] h-[120px] w-[118px]">
        <path d="M0 4L59 119 117 0z" fill="#fff" stroke="#333" strokeWidth="0.6" />
        <path d="M112 0h5L59 119l-2-5z" fill="#c0c0c0" />
        <path d="M2 4L112 0 57 114z" fill="#000" />
      </svg>
      <div className="absolute left-[523px] top-[528px] h-[95px] w-[105px] rounded-[50%] border border-[#063030] bg-[#008080]" />
      <div className="absolute left-[676px] top-[586px] h-[54px] w-[224px] rounded-[42px/13px] border border-[#063030] bg-[#008080]" />
      <div className="absolute left-[1060px] top-[701px] flex h-[83px] w-[200px] items-center justify-center border-[4px] border-b-[#000058] border-l-[#0000d8] border-r-[#000058] border-t-[#0000d8] bg-[#000080] text-[13px] text-[#e8e8ff]">
        Shutdown
      </div>
    </div>
  )
}

function CloseX({ size }: { size: string }) {
  return (
    <svg viewBox="0 0 12 10" className={size}>
      <path d="M2 1l8 8M10 1L2 9" stroke="#fff" strokeWidth="2.6" />
    </svg>
  )
}

function ChildWindow() {
  return (
    <div className="ml-[5px] mt-[3px] flex h-[837px] w-[1295px] flex-col rounded-t-[3px] border border-[#39505f] bg-[#b8d2ec] px-[7px] pb-[6px]">
      <div className="-mx-[7px] flex h-[28px] shrink-0 items-center bg-gradient-to-b from-[#9cb5d2] to-[#bcd3ea] pl-[10px] pr-[8px]">
        <span className="mt-[3px] flex items-center">
          <TreeIcon name="paint" />
          <span className="ml-[2px] font-['Noto_Sans',sans-serif] text-[11.7px] text-[#111]">RHLAB1 - /RHLAB1FF// (Display)</span>
        </span>
        <div className="ml-auto mt-[1px] flex gap-[4px]">
          <span className="flex h-[16px] w-[30px] items-center justify-center rounded-[2px] border border-[#58708a] bg-gradient-to-b from-[#b8cde2] to-[#8aa6c4]">
            <span className="mt-[3px] h-[4px] w-[10px] border border-[#455] bg-white" />
          </span>
          <span className="flex h-[16px] w-[30px] items-center justify-center rounded-[2px] border border-[#58708a] bg-gradient-to-b from-[#b8cde2] to-[#8aa6c4]">
            <span className="h-[8px] w-[10px] border-2 border-[#39495a] bg-white" />
          </span>
          <span className="-ml-[2px] flex h-[16px] w-[31px] items-center justify-center rounded-[2px] border border-[#7a3a30] bg-gradient-to-b from-[#d88a78] to-[#b83a28]">
            <CloseX size="h-[9px] w-[11px]" />
          </span>
        </div>
      </div>
      <Canvas />
    </div>
  )
}

function MessageBar() {
  return (
    <div className="flex h-[38px] shrink-0 flex-col bg-[#f0f0f0]">
      <div className="h-[5px] bg-[#f4f4f4]" />
      <div className="h-[4px] border-y border-y-[#777] bg-[#e8e8e8]" />
      <div className="flex flex-1 items-start border-b-2 border-b-[#aaa] pl-[4px] pr-[4px] pt-[1px]">
        <div className="mr-[2px] flex w-[11px] flex-col items-center">
          <span className="flex h-[10px] w-[10px] items-center justify-center border border-[#888] text-[10px] font-bold leading-none">×</span>
          <span className="mt-[1px] h-[9px] w-[9px] bg-[#ccc]" />
        </div>
        <div className="flex h-[23px] flex-1 items-center border border-black pl-[1px] pr-[3px]">
          <div className="flex h-[19px] flex-1 items-center border border-[#999] bg-white pl-[5px] font-['Noto_Sans',sans-serif] text-[11.35px] text-[#111]">
            <svg viewBox="0 0 16 16" className="mr-[2px] h-[15px] w-[15px] shrink-0">
              <path d="M8 1a7 6.5 0 0 1 0 13c-1 0-2 0-3 1l-1-2a7 6.5 0 0 1 4-12z" fill="#fff" stroke="#444" />
              <path d="M7 3h2v2H7zM6 6h3v5h1v1H6v-1h1V7H6z" fill="#1828b8" />
            </svg>
            In service. The FactoryTalk Project Directory Server RHLAB1FF:RSLinx Enterprise on computer TC-312-08-LABS is now active.
          </div>
          <button className="ml-[5px] h-[16px] w-[34px] rounded-[3px] border border-[#888] bg-[#efefef] font-['Noto_Sans',sans-serif] text-[11px] leading-none text-[#222]">Clear</button>
          <button className="ml-[6px] h-[16px] w-[47px] rounded-[3px] border border-[#888] bg-[#efefef] font-['Noto_Sans',sans-serif] text-[11px] leading-none text-[#222]">Clear All</button>
        </div>
      </div>
    </div>
  )
}

function TaskIcon({ name }: { name: string }) {
  if (name === "ft") {
    return (
      <svg viewBox="0 0 32 32" className="h-[32px] w-[32px]">
        <circle cx="16" cy="16" r="15" fill="#d8d4d0" />
        <rect x="7" y="8" width="18" height="16" fill="#fff" stroke="#8a1a1a" strokeWidth="3" />
        <path d="M7 25L25 5" stroke="#e0b020" strokeWidth="3" />
      </svg>
    )
  }
  if (name === "ie") {
    return (
      <svg viewBox="0 0 32 32" className="h-[32px] w-[32px]">
        <circle cx="16" cy="16" r="14" fill="#2a6cc0" stroke="#c8c8c8" strokeWidth="2.5" />
        <path d="M4 22C12 18 22 12 28 8" stroke="#cfe4f8" strokeWidth="3" fill="none" />
        <path d="M8 8c5-3 10-3 14 0" stroke="#7ab0e8" strokeWidth="3" fill="none" />
      </svg>
    )
  }
  if (name === "net") {
    return (
      <svg viewBox="0 0 34 34" className="h-[34px] w-[34px]">
        <path d="M8 14l14 18h6L14 8z" fill="#e8d020" stroke="#222" />
        <rect x="4" y="2" width="14" height="11" fill="#2030c8" stroke="#222" />
        <rect x="2" y="13" width="18" height="4" fill="#ccc" stroke="#222" />
        <rect x="22" y="20" width="10" height="13" fill="#444" stroke="#111" />
      </svg>
    )
  }
  if (name === "folder") {
    return (
      <svg viewBox="0 0 34 30" className="h-[30px] w-[34px]">
        <path d="M2 4h11l3 3h16v21H2z" fill="#f0d888" stroke="#b09040" />
        <path d="M4 2h7M14 5h6M22 5h6" stroke="#60b060" strokeWidth="2" />
        <path d="M6 28v-8h6v-4h10v4h6v8z" fill="#7cc0e8" stroke="#3a80b0" />
      </svg>
    )
  }
  return (
    <svg viewBox="0 0 32 32" className="h-[32px] w-[32px]">
      <circle cx="20" cy="11" r="8" fill="#9a9a9a" stroke="#555" strokeWidth="2" strokeDasharray="3 1.5" />
      <circle cx="12" cy="22" r="9" fill="#c8c8c8" stroke="#666" strokeWidth="2" strokeDasharray="3 1.5" />
      <circle cx="12" cy="22" r="3" fill="#444" />
    </svg>
  )
}

function Taskbar() {
  return (
    <div className="flex h-[40px] shrink-0 items-center border-t border-t-[#22364e] bg-gradient-to-b from-[#1b3551] to-[#0f2038] pl-[8px] font-['Noto_Sans',sans-serif]">
      <svg viewBox="0 0 38 38" className="h-[38px] w-[38px] shrink-0">
        <circle cx="19" cy="19" r="18" fill="#1f5f9e" stroke="#5a8fc0" />
        <path d="M3 17a16 16 0 0 1 32 0c-8 4-24 4-32 0z" fill="#6aa8dc" opacity="0.6" />
        <path d="M10 12l8-2v8l-8 1z" fill="#e2562a" />
        <path d="M19 10l9 2v7l-9-1z" fill="#7cb82c" />
        <path d="M10 20l8-1v8l-8-2z" fill="#3a9ce8" />
        <path d="M19 19l9 1v7l-9 1z" fill="#f0c020" />
      </svg>
      <span className="ml-[26px] mr-[30px] flex w-[32px] justify-center"><TaskIcon name="ie" /></span>
      <span className="mr-[18px] flex w-[32px] justify-center"><TaskIcon name="ft" /></span>
      <div className="flex gap-[4px]">
        <span className="flex h-[38px] w-[58px] items-center justify-center rounded-[3px] border border-[#5a7088] bg-gradient-to-b from-[#4a6480] to-[#243e5a]"><TaskIcon name="net" /></span>
        <span className="flex h-[38px] w-[58px] items-center justify-center rounded-[3px] border border-[#5a7088] bg-gradient-to-b from-[#4a6480] to-[#243e5a]"><TaskIcon name="folder" /></span>
        <span className="flex h-[38px] w-[58px] items-center justify-center rounded-[3px] border border-[#7a8ea4] bg-gradient-to-b from-[#7a90a8] to-[#4a6480]"><TaskIcon name="ft" /></span>
        <span className="flex h-[38px] w-[58px] items-center justify-center rounded-[3px] border border-[#5a7088] bg-gradient-to-b from-[#4a6480] to-[#243e5a]"><TaskIcon name="gears" /></span>
      </div>
      <div className="ml-auto flex h-full items-center">
        <span className="mr-[9px] h-0 w-0 border-x-[4px] border-b-[5px] border-x-transparent border-b-white" />
        <svg viewBox="0 0 16 16" className="mr-[34px] h-[16px] w-[16px]">
          <path d="M1 5h3l5-4v14l-5-4H1z" fill="#e8e8e8" />
          <circle cx="12" cy="11" r="4" fill="#d82020" />
          <path d="M9.5 9.5l5 3" stroke="#fff" strokeWidth="1.5" />
        </svg>
        <svg viewBox="0 0 16 18" className="mr-[9px] h-[18px] w-[16px]">
          <path d="M2 1v16" stroke="#fff" strokeWidth="1.5" />
          <path d="M3 2h8v7H3z" fill="#f0f0f0" />
          <circle cx="11" cy="12" r="4" fill="#d82020" />
          <path d="M9 10l4 4M13 10l-4 4" stroke="#fff" />
        </svg>
        <div className="mr-[2px] flex w-[70px] flex-col items-center text-[11.7px] leading-[16px] text-white">
          <span>5:06 PM</span>
          <span>2/20/2023</span>
        </div>
        <span className="h-full w-[13px] rounded-[2px] border border-[#5a7088] bg-[#3c5470]" />
      </div>
    </div>
  )
}

export default function App() {
  const menus = ["File", "Edit", "View", "Objects", "Arrange", "Animation", "Application", "Tools", "Window", "Help"]
  return (
    <div className="flex h-[1080px] w-[1920px] flex-col overflow-hidden bg-[#d3d9ec] font-['Noto_Sans',sans-serif]">
      {/* Title bar */}
      <div className="flex h-[20px] shrink-0 items-center bg-[linear-gradient(90deg,#a9b8c6_0%,#a2b2c2_13%,#6c85a0_16%,#3f5c78_22%,#1f3b57_35%,#1c3450_100%)] pl-[2px]">
        <svg viewBox="0 0 16 16" className="h-[14px] w-[14px]">
          <rect x="1" y="2" width="13" height="12" fill="#fff" stroke="#8a1a1a" strokeWidth="2" />
          <path d="M2 15L14 2" stroke="#e0a020" strokeWidth="2" />
        </svg>
        <span className="ml-[5px] text-[11.6px] text-[#111]">FactoryTalk View Studio - View Machine Edition</span>
        <div className="ml-auto mr-[2px] flex h-[18px] self-start overflow-hidden rounded-b-[4px] border border-t-0 border-[#c0ccd8]/60">
          <span className="flex w-[28px] items-center justify-center bg-[#50687f]"><span className="h-[3px] w-[10px] bg-white" /></span>
          <span className="flex w-[26px] items-center justify-center border-x border-[#c0ccd8]/60 bg-[#50687f]"><span className="h-[9px] w-[10px] border-2 border-white" /></span>
          <span className="flex w-[47px] items-center justify-center bg-gradient-to-b from-[#c8604c] to-[#b02818]"><CloseX size="h-[10px] w-[12px]" /></span>
        </div>
      </div>
      {/* Menu */}
      <div className="flex h-[21px] shrink-0 items-center gap-[13px] border-t border-t-white bg-gradient-to-b from-white to-[#e6eaf6] pl-[7px] pt-[2px] text-[11.7px] text-[#111]">
        {menus.map((m) => (
          <span key={m}>{m}</span>
        ))}
      </div>
      {/* Toolbars */}
      <div className="flex h-[90px] shrink-0 flex-col">
        <Toolbar items={row1} width="w-[323px]" itemWidth="w-[23px]" grip="pl-[8px]" />
        <Toolbar items={row2} width="w-[496px]" itemWidth="w-[23.9px]" grip="pl-[10px]" />
        <Toolbar items={row3} width="w-[1487px]" itemWidth="w-[23px]" grip="pl-[9px]" />
      </div>
      {/* Workspace */}
      <div className="flex min-h-0 flex-1 border-t border-t-[#777]">
        <Explorer />
        <div className="h-full flex-1 bg-[#aaaaaa] pr-[2px]">
          <ChildWindow />
        </div>
        <span className="h-full w-[2px] bg-[#e8e8e8]" />
      </div>
      <MessageBar />
      <div className="flex h-[20px] shrink-0 items-center justify-end bg-[#f0eeeb] pr-[35px] text-[12px] text-[#333]">
        <span className="border-x border-[#ccc] px-[5px]">NUM</span>
      </div>
      <Taskbar />
    </div>
  )
}
